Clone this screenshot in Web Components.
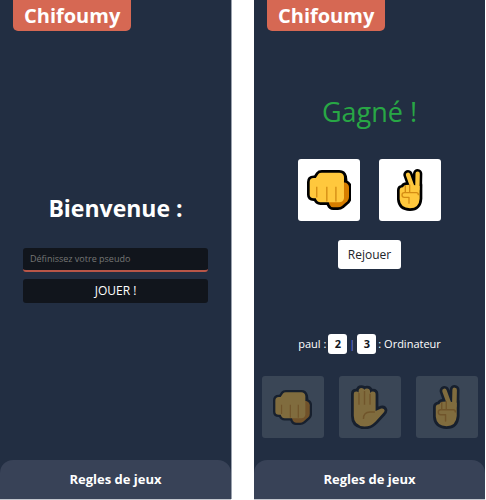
<!DOCTYPE html>
<html lang="fr">
<head>
<meta charset="utf-8">
<title>Chifoumy</title>
<style>
  html, body { margin: 0; }
  body { background: #fff; font-family: "Open Sans", "Noto Sans", sans-serif; color: #fff; }
</style>
</head>
<body>
<chifoumy-app></chifoumy-app>

<script>
const define = (name, html, setup) => {
  const template = document.createElement('template');
  template.innerHTML = html;
  customElements.define(name, class extends HTMLElement {
    constructor() {
      super();
      this.attachShadow({ mode: 'open' }).append(template.content.cloneNode(true));
    }
    connectedCallback() { if (setup) setup(this, this.shadowRoot); }
  });
};

const icons = {
  rock: `<svg viewBox="50 62 133 119" aria-hidden="true">
    <g stroke-linejoin="round">
      <path class="edge" d="M58 98Q58 86 70 86H76L84 74Q87 70 94 70H146Q158 70 161 82L163 99Q175 103 175 114V142Q175 150 170 155L154 169Q149 173 142 173H128Q120 173 117 165L114 158H90Q80 158 76 146H70Q58 146 58 136Z"/>
      <path class="shade" d="M150 99H163Q175 103 175 114V142Q175 150 170 155L154 169Q149 173 142 173H128Q120 173 117 165L112 150Z"/>
      <path class="skin" d="M58 98Q58 86 70 86H76L84 74Q87 70 94 70H146Q158 70 160 82V146Q158 158 146 158H90Q80 158 76 146H70Q58 146 58 136Z"/>
      <path class="line" d="M79 112V144M109 112V156M136 112V156"/>
    </g></svg>`,
  paper: `<svg viewBox="41 25 105 127" aria-hidden="true">
    <path class="edge" d="M49 50Q49 44 56 44Q61 44 63 47V42Q64 34 71 34Q77 34 80 39Q82 35 87 35Q95 35 96 43V48Q99 44 104 44Q112 44 112 52V100L128 93Q136 91 138 98Q138 102 134 106L112 130Q98 145 80 145Q49 143 49 114Z"/>
    <path class="skin" d="M49 50Q49 44 56 44Q61 44 63 47V42Q64 34 71 34Q77 34 80 39Q82 35 87 35Q95 35 96 43V48Q99 44 104 44Q112 44 112 52V100L128 93Q136 91 138 98Q138 102 134 106L112 130Q98 145 80 145Q49 143 49 114Z"/>
    <path class="line" d="M64 48V82M80 42V82M96 50V82M77 123Q77 103 96 103H110"/></svg>`,
  scissors: `<svg viewBox="322 59 76 126" aria-hidden="true">
    <g stroke-linecap="round">
      <path class="edge" d="M330 122Q330 115 340 114Q342 108 349 107H390V148Q388 177 361 177Q332 176 330 150Z"/>
      <path class="rim" d="M384 73L383 120M355 76L368 112"/>
      <path class="skin" d="M330 122Q330 115 340 114Q342 108 349 107L362 106L377 108L390 110V148Q388 177 361 177Q332 176 330 150Z"/>
      <path class="finger" d="M384 73L383 120M355 76L368 112"/>
      <path class="line" d="M347 109V129M360 107V129M386 136Q386 130 380 130H344Q337 130 337 137Q337 144 344 144H358V162"/>
    </g></svg>`
};

define('hand-card', `
  <style>
    :host { display: block; --skin: #ffc83d; --shade: #d67d00; --line: #d48c14; --edge: #000; --card: #fff; }
    :host([muted]) { --skin: #806c3e; --shade: #71522a; --line: #70552b; --edge: #17202e; --card: #3a4656; }
    button { display: grid; place-items: center; width: 62px; height: 62px; padding: 0;
      border: 0; border-radius: 3px; background: var(--card); }
    svg { display: block; height: 42px; }
    :host([kind="rock"]) svg { height: 40px; }
    :host([muted]) svg { height: 44px; }
    :host([muted][kind="rock"]) svg { height: 35px; }
    .edge { fill: var(--edge); stroke: var(--edge); stroke-width: 16; stroke-linejoin: round; }
    .rim { fill: none; stroke: var(--edge); stroke-width: 28; }
    .skin { fill: var(--skin); }
    .finger { fill: none; stroke: var(--skin); stroke-width: 13; }
    .shade { fill: var(--shade); }
    .line { fill: none; stroke: var(--line); stroke-width: 4; stroke-linejoin: round; }
  </style>
  <button type="button"></button>`,
  (host, root) => {
    const button = root.querySelector('button');
    button.innerHTML = icons[host.getAttribute('kind')];
    button.setAttribute('aria-label', host.getAttribute('label'));
    button.disabled = host.hasAttribute('muted');
  });

define('phone-screen', `
  <style>
    :host { display: flex; flex-direction: column; min-width: 0; background: #222e42; overflow: hidden; }
    header { display: flex; padding: 0 13px; }
    h1 { margin: 0; padding: 0 11px; height: 31px; line-height: 31px; font-size: 20px; font-weight: 700;
      background: #d66853; border-radius: 0 0 5px 5px; box-sizing: border-box; }
    main { flex: 1; display: flex; flex-direction: column; }
    footer button { display: block; width: 100%; height: 39px; padding: 0; border: 0; border-radius: 13px 13px 0 0;
      background: #384257; color: #fff; font: 700 13px/39px "Open Sans", "Noto Sans", sans-serif; }
  </style>
  <header><h1>Chifoumy</h1></header>
  <main><slot></slot></main>
  <footer><button type="button">Regles de jeux</button></footer>`);

define('login-form', `
  <style>
    :host { flex: 1; display: flex; flex-direction: column; justify-content: center; padding: 4px 23px 0; }
    h2 { margin: 0 0 24px; font-size: 23px; line-height: 32px; font-weight: 700; text-align: center; }
    form { display: grid; gap: 7px; }
    input, button { box-sizing: border-box; width: 100%; height: 24px; margin: 0; border: 0; border-radius: 3px;
      background: #11151c; color: #fff; font: 12px/24px "Open Sans", "Noto Sans", sans-serif; }
    input { padding: 0 7px; border-bottom: 2px solid #b85648; font-size: 9px; }
    input::placeholder { color: #757575; opacity: 1; }
    button { padding: 0; }
  </style>
  <h2>Bienvenue :</h2>
  <form>
    <input type="text" aria-label="Pseudo" placeholder="Définissez votre pseudo">
    <button type="button">JOUER !</button>
  </form>`);

define('score-board', `
  <style>
    :host { display: flex; justify-content: center; align-items: center; gap: 2px; font-size: 11px; line-height: 20px; }
    b { width: 19px; height: 20px; text-align: center; border-radius: 3px; background: #fff; color: #11151c; }
    i { font-style: normal; color: #6f7cf0; }
  </style>
  <span>paul :</span><b>2</b><i>|</i><b>3</b><span>: Ordinateur</span>`);

define('game-round', `
  <style>
    :host { flex: 1; display: flex; flex-direction: column; align-items: center; padding-bottom: 22px; }
    h2 { margin: 61px 0 0; font-size: 27px; line-height: 40px; font-weight: 500; color: #28a745; }
    .duel { display: flex; gap: 19px; margin-top: 27px; }
    .again { margin-top: 19px; height: 29px; padding: 0 10px; border: 0; border-radius: 3px; background: #fff; color: #212529;
      font: 12px/29px "Open Sans", "Noto Sans", sans-serif; }
    score-board { margin-top: auto; }
    .choices { display: flex; gap: 15px; margin-top: 22px; }
  </style>
  <h2>Gagné !</h2>
  <div class="duel">
    <hand-card kind="rock" label="Pierre"></hand-card>
    <hand-card kind="scissors" label="Ciseaux"></hand-card>
  </div>
  <button class="again" type="button">Rejouer</button>
  <score-board></score-board>
  <div class="choices">
    <hand-card muted kind="rock" label="Pierre"></hand-card>
    <hand-card muted kind="paper" label="Feuille"></hand-card>
    <hand-card muted kind="scissors" label="Ciseaux"></hand-card>
  </div>`);

define('chifoumy-app', `
  <style>
    :host { display: grid; grid-template-columns: 1fr 1fr; gap: 23px; min-height: 100vh; box-sizing: border-box; padding: 0 1px 1px 0; }
    phone-screen { box-shadow: 0 1px #c3c7ce; }
    phone-screen:first-of-type { box-shadow: 0 1px #c3c7ce, 1px 0 #9aa1ad; }
  </style>
  <phone-screen><login-form></login-form></phone-screen>
  <phone-screen><game-round></game-round></phone-screen>`);
</script>
</body>
</html>
